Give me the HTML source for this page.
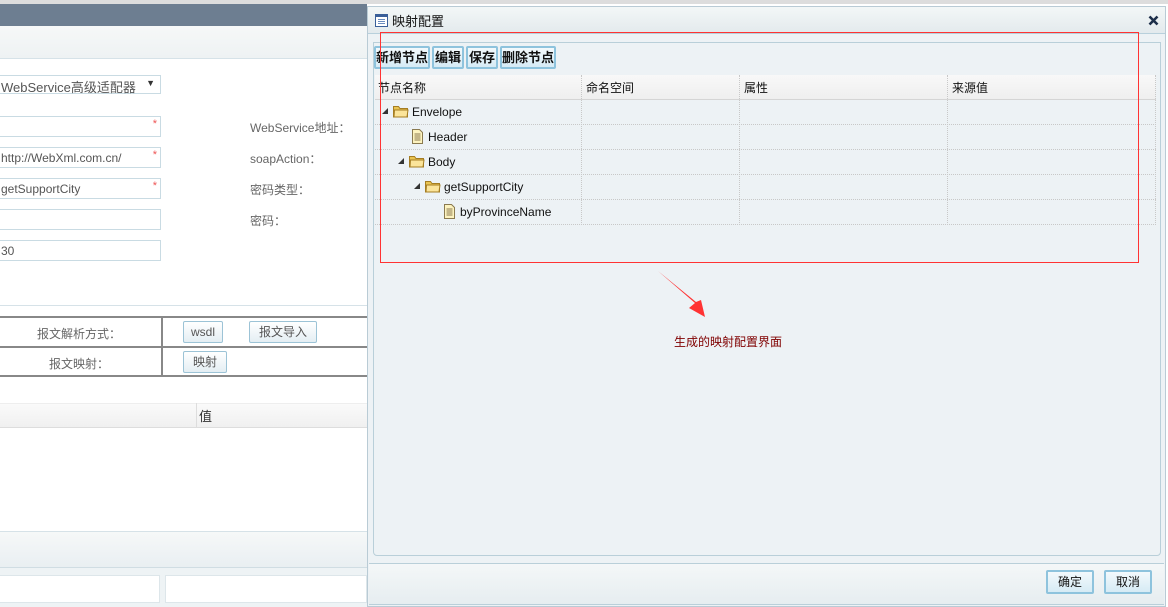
<!DOCTYPE html>
<html><head><meta charset="utf-8"><style>
*{box-sizing:border-box;margin:0;padding:0}
body{width:1168px;height:607px;overflow:hidden;background:#fff;font-family:"Liberation Sans","Noto Sans CJK SC",sans-serif;font-size:12px;color:#333;position:relative}
.a{position:absolute}
.inp{position:absolute;left:-2px;width:163px;height:21px;border:1px solid #c9dbe3;background:#fff;color:#555;padding:3px 0 0 2px}
.star{position:absolute;right:3px;top:1px;color:#e55;font-size:11px}
.lbl{position:absolute;left:250px;color:#666}
.btn{position:absolute;height:22px;border:1px solid #9cc3d6;border-radius:2px;background:linear-gradient(#fff,#e4eef3);color:#555;text-align:center;line-height:20px}
.tb{position:absolute;top:46px;height:23px;border:2px solid #8ec3dd;border-radius:2px;background:linear-gradient(#f3f9fc,#d6ebf5);font-weight:bold;color:#111;font-size:13px;line-height:19px;text-align:center}
.row{position:absolute;left:375px;width:781px;height:25px;border-bottom:1px dotted #c8c8c8}
.vl{position:absolute;top:75px;height:150px;border-left:1px dotted #c8c8c8}
.t{position:absolute;font-size:12px;color:#111}
</style></head><body>
<div class="a" style="left:0;top:0;width:1168px;height:4px;background:#ddd"></div>
<div class="a" style="left:0;top:4px;width:367px;height:22px;background:#6d7e91"></div>
<div class="a" style="left:0;top:26px;width:367px;height:33px;background:linear-gradient(#f6f8f8,#eef2f3);border-bottom:1px solid #d6e2e8"></div>
<div class="inp" style="top:75px;height:19px;padding-top:1px;font-size:13px">WebService高级适配器<span style="position:absolute;right:5px;top:2px;font-size:9px;color:#333">▼</span></div>
<div class="inp" style="top:116px"><span class="star">*</span></div>
<div class="inp" style="top:147px">http://WebXml.com.cn/<span class="star">*</span></div>
<div class="inp" style="top:178px">getSupportCity<span class="star">*</span></div>
<div class="inp" style="top:209px"></div>
<div class="inp" style="top:240px">30</div>
<div class="lbl" style="top:119px">WebService地址：</div>
<div class="lbl" style="top:150px">soapAction：</div>
<div class="lbl" style="top:181px">密码类型：</div>
<div class="lbl" style="top:212px">密码：</div>
<div class="a" style="left:0;top:305px;width:367px;border-top:1px solid #d6e2e8"></div>
<div class="a" style="left:0;top:316px;width:367px;height:61px;border-top:2px solid #888;border-bottom:2px solid #888"></div>
<div class="a" style="left:0;top:346px;width:367px;border-top:2px solid #888"></div>
<div class="a" style="left:161px;top:316px;height:61px;border-left:2px solid #888"></div>
<div class="a" style="left:37px;top:325px;color:#666">报文解析方式：</div>
<div class="a" style="left:49px;top:355px;color:#666">报文映射：</div>
<div class="btn" style="left:183px;top:321px;width:40px">wsdl</div>
<div class="btn" style="left:249px;top:321px;width:68px">报文导入</div>
<div class="btn" style="left:183px;top:351px;width:44px">映射</div>
<div class="a" style="left:0;top:403px;width:367px;height:25px;background:linear-gradient(#fafafa,#f0f0f0);border-bottom:1px solid #ddd;border-top:1px solid #eee"></div>
<div class="a" style="left:196px;top:403px;height:25px;border-left:1px solid #ddd"></div>
<div class="a" style="left:199px;top:406px;font-size:13px">值</div>
<div class="a" style="left:0;top:531px;width:367px;height:37px;background:linear-gradient(#f6f8f8,#e9eff2);border-top:1px solid #d6e2e8;border-bottom:1px solid #d0dde3"></div>
<div class="a" style="left:0;top:568px;width:367px;height:39px;background:#eef3f5"></div>
<div class="a" style="left:-2px;top:575px;width:162px;height:28px;background:#fff;border:1px solid #dde6ea"></div>
<div class="a" style="left:165px;top:575px;width:202px;height:28px;background:#fff;border:1px solid #dde6ea"></div>

<!-- dialog -->
<div class="a" style="left:367px;top:6px;width:799px;height:601px;background:#edf2f5;border:1px solid #b9cbd5"></div>
<div class="a" style="left:368px;top:7px;width:797px;height:27px;background:linear-gradient(#f3f7f7,#e3eaed);border-bottom:1px solid #b8d0dc"></div>
<svg class="a" style="left:375px;top:14px" width="13" height="13"><rect x=".5" y=".5" width="12" height="12" fill="#fff" stroke="#3a5f99"/><rect x="1" y="1" width="11" height="2" fill="#3a5f99"/><path d="M3 5.5h7M3 7.5h7M3 9.5h7" stroke="#6a8cbf"/></svg>
<div class="a" style="left:392px;top:11px;font-size:13px;color:#111">映射配置</div>
<svg class="a" style="left:1148px;top:15px" width="11" height="11"><path d="M1.5 1.5L9.5 9.5M9.5 1.5L1.5 9.5" stroke="#1d2f4a" stroke-width="2.6"/></svg>
<div class="a" style="left:373px;top:42px;width:788px;height:514px;border:1px solid #b9cfd9;border-radius:0 0 4px 4px"></div>
<div class="tb" style="left:374px;width:56px">新增节点</div>
<div class="tb" style="left:432px;width:32px">编辑</div>
<div class="tb" style="left:466px;width:32px">保存</div>
<div class="tb" style="left:500px;width:56px">删除节点</div>
<div class="a" style="left:375px;top:75px;width:781px;height:25px;background:linear-gradient(#f8f8f8,#efefef);border-bottom:1px solid #d5d5d5"></div>
<div class="row" style="top:100px"></div><div class="row" style="top:125px"></div><div class="row" style="top:150px"></div><div class="row" style="top:175px"></div><div class="row" style="top:200px"></div>
<div class="vl" style="left:581px"></div><div class="vl" style="left:739px"></div><div class="vl" style="left:947px"></div><div class="vl" style="left:1155px"></div>
<div class="t" style="left:378px;top:79px">节点名称</div>
<div class="t" style="left:586px;top:79px">命名空间</div>
<div class="t" style="left:744px;top:79px">属性</div>
<div class="t" style="left:952px;top:79px">来源值</div>
<svg width="0" height="0" style="position:absolute"><defs>
<g id="fd"><path d="M.5 2.5h5l1.5 2h7.5v8.5h-14z" fill="#e9c451" stroke="#a57d22"/><path d="M1.5 6h13.5l-1 7h-13z" fill="#fbe49a" stroke="#a57d22"/></g>
<g id="fl"><path d="M.5.5h7l3 3v11h-10z" fill="#fdf3bf" stroke="#8a7a50"/><path d="M2.5 5h6M2.5 7h6M2.5 9h6M2.5 11h6" stroke="#8a7a50"/></g>
<g id="tr"><path d="M6 0v6h-6z" fill="#333"/></g>
</defs></svg>
<svg class="a" style="left:382px;top:108px" width="6" height="6"><use href="#tr"/></svg>
<svg class="a" style="left:393px;top:104px" width="16" height="14"><use href="#fd"/></svg>
<div class="t" style="left:412px;top:105px">Envelope</div>
<svg class="a" style="left:412px;top:129px" width="12" height="16"><use href="#fl"/></svg>
<div class="t" style="left:428px;top:130px">Header</div>
<svg class="a" style="left:398px;top:158px" width="6" height="6"><use href="#tr"/></svg>
<svg class="a" style="left:409px;top:154px" width="16" height="14"><use href="#fd"/></svg>
<div class="t" style="left:428px;top:155px">Body</div>
<svg class="a" style="left:414px;top:183px" width="6" height="6"><use href="#tr"/></svg>
<svg class="a" style="left:425px;top:179px" width="16" height="14"><use href="#fd"/></svg>
<div class="t" style="left:444px;top:180px">getSupportCity</div>
<svg class="a" style="left:444px;top:204px" width="12" height="16"><use href="#fl"/></svg>
<div class="t" style="left:460px;top:205px">byProvinceName</div>
<div class="a" style="left:380px;top:32px;width:759px;height:231px;border:1px solid #f33"></div>
<svg class="a" style="left:655px;top:268px" width="55" height="52"><path d="M3 3L40 35L34 40L50 49L46 32L41 34Z" fill="#f33"/></svg>
<div class="a" style="left:674px;top:333px;color:#800000">生成的映射配置界面</div>
<div class="a" style="left:369px;top:563px;width:795px;height:42px;background:linear-gradient(#f4f7f8,#e6edf0);border-top:1px solid #b9cfd9;border-bottom:1px solid #b9cfd9"></div>
<div class="tb" style="left:1046px;top:570px;width:48px;height:24px;line-height:20px;font-weight:normal;font-size:12px">确定</div>
<div class="tb" style="left:1104px;top:570px;width:48px;height:24px;line-height:20px;font-weight:normal;font-size:12px">取消</div>
</body></html>
